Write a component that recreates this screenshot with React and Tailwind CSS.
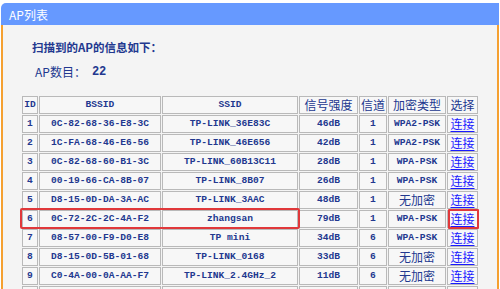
import React from "react";

const rows = [
  ["1", "0C-82-68-36-E8-3C", "TP-LINK_36E83C", "46dB", "1", "WPA2-PSK"],
  ["2", "1C-FA-68-46-E6-56", "TP-LINK_46E656", "42dB", "1", "WPA2-PSK"],
  ["3", "0C-82-68-60-B1-3C", "TP-LINK_60B13C11", "28dB", "1", "WPA-PSK"],
  ["4", "00-19-66-CA-8B-07", "TP-LINK_8B07", "26dB", "1", "WPA-PSK"],
  ["5", "D8-15-0D-DA-3A-AC", "TP-LINK_3AAC", "48dB", "1", "无加密"],
  ["6", "0C-72-2C-2C-4A-F2", "zhangsan", "79dB", "1", "WPA-PSK"],
  ["7", "08-57-00-F9-D0-E8", "TP mini", "34dB", "6", "WPA-PSK"],
  ["8", "D8-15-0D-5B-01-68", "TP-LINK_0168", "33dB", "6", "无加密"],
  ["9", "C0-4A-00-0A-AA-F7", "TP-LINK_2.4GHz_2", "11dB", "6", "无加密"],
  ["", "", "", "", "", ""],
];

const mono = "font-['Liberation_Mono',monospace] text-[9.6px] font-bold";
const cjk = "font-['Noto_Sans_CJK_SC',sans-serif] text-[12px] font-normal";
const cell = "border border-[#b9b9b9] bg-[#f7f7f7] h-[18px] p-0 text-center align-middle leading-none";

export default function App() {
  return (
    <div className="w-[500px] h-[289px] overflow-hidden bg-white pt-[3px] pl-[1px]">
      <div className="w-[498px] h-[286px] flex flex-col">
        <div className="h-[22px] shrink-0 bg-[#6699ff] rounded-tl-[5px] flex items-center pl-[8px] pt-[1px] text-white font-['Noto_Sans_CJK_SC',sans-serif] text-[12px]">
          AP列表
        </div>
        <div className="flex-1 bg-[#f4f4f4] border-l-2 border-r-2 border-[#f5a030] text-[#22388f]">
          <div className="pl-[29px] pt-[12px] h-[21px] flex items-center font-['Noto_Sans_CJK_SC',sans-serif] text-[11.5px] font-bold box-content">
            扫描到的AP的信息如下：
          </div>
          <div className="pl-[32px] pt-[3px] h-[21px] flex items-center font-['Noto_Sans_CJK_SC',sans-serif] text-[12px] box-content">
            <span>AP数目：</span>
            <span className="font-['Liberation_Mono',monospace] text-[12px] font-bold ml-[6px]">22</span>
          </div>
          <div className="relative ml-[19px] mt-[14px]">
            <table className="border-separate border-spacing-[1px] -m-[1px] table-fixed">
              <colgroup>
                <col className="w-[16px]" />
                <col className="w-[122px]" />
                <col className="w-[136px]" />
                <col className="w-[59px]" />
                <col className="w-[28px]" />
                <col className="w-[58px]" />
                <col className="w-[31px]" />
              </colgroup>
              <thead>
                <tr>
                  <th className={`${cell} ${mono}`}>ID</th>
                  <th className={`${cell} ${mono}`}>BSSID</th>
                  <th className={`${cell} ${mono}`}>SSID</th>
                  <th className={`${cell} ${cjk}`}>信号强度</th>
                  <th className={`${cell} ${cjk}`}>信道</th>
                  <th className={`${cell} ${cjk}`}>加密类型</th>
                  <th className={`${cell} ${cjk}`}>选择</th>
                </tr>
              </thead>
              <tbody>
                {rows.map((r, i) => (
                  <tr key={i}>
                    <td className={`${cell} ${mono}`}>{r[0]}</td>
                    <td className={`${cell} ${mono}`}>{r[1]}</td>
                    <td className={`${cell} ${mono}`}>{r[2]}</td>
                    <td className={`${cell} ${mono}`}>{r[3]}</td>
                    <td className={`${cell} ${mono}`}>{r[4]}</td>
                    <td className={`${cell} ${r[5] === "无加密" ? cjk : mono}`}>{r[5]}</td>
                    <td className={`${cell} ${cjk}`}>
                      {r[0] && <span className="text-[#1a1aff] underline underline-offset-2">连接</span>}
                    </td>
                  </tr>
                ))}
              </tbody>
            </table>
            <div className="absolute left-[-2px] top-[113px] w-[280px] h-[21px] border-2 border-[#e0383a] rounded-[2px]" />
            <div className="absolute left-[426px] top-[114px] w-[31px] h-[20px] border-2 border-[#e0383a] rounded-[1px]" />
          </div>
        </div>
      </div>
    </div>
  );
}
